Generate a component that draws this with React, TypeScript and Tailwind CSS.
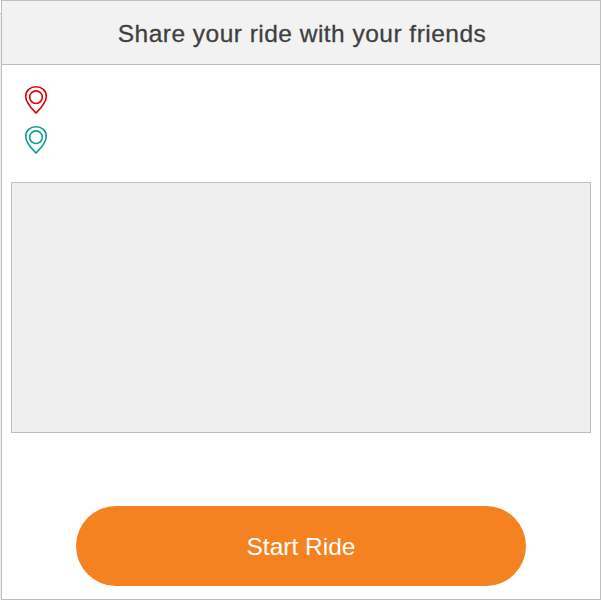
function Pin({ className }: { className: string }) {
  return (
    <svg
      width="24"
      height="30"
      viewBox="0 0 24 30"
      fill="none"
      stroke="currentColor"
      strokeWidth="1.6"
      strokeLinejoin="round"
      className={className}
    >
      <path d="M12 28C9 24.8 1.7 18 1.7 11.4C1.7 5.7 6.3 1.8 12 1.8S22.3 5.7 22.3 11.4C22.3 18 15 24.8 12 28Z" />
      <circle cx="12" cy="12.2" r="6.3" />
    </svg>
  );
}

export default function App() {
  return (
    <div className="flex h-[600px] w-[601px] bg-white font-['Liberation_Sans',Arial,sans-serif]">
      <div className="mt-[13px] w-px shrink-0 border-t border-[#bfbfbf] bg-[#ececec]" />
      <main className="flex w-[600px] flex-col border border-[#bfbfbf] bg-white">
        <header className="flex h-16 shrink-0 items-center justify-center border-b border-[#bfbfbf] bg-[#f2f2f2]">
          <h1 className="whitespace-nowrap pl-[2px] pt-[3px] text-[24.5px] tracking-[0.48px] text-[#3f4040] [-webkit-text-stroke:0.3px_#3f4040]">
            Share your ride with your friends
          </h1>
        </header>
        <div className="flex flex-col gap-[10px] pl-[22px] pt-5">
          <Pin className="text-[#e00000]" />
          <Pin className="text-[#0d9f93]" />
        </div>
        <div className="mx-[9px] mt-[27px] h-[251px] shrink-0 border border-[#bfbfbf] bg-[#efefef]" />
        <button className="ml-[74px] mt-[73px] h-20 w-[450px] shrink-0 rounded-full bg-[#f58220] pt-[2px] text-[24.5px] text-white">
          Start Ride
        </button>
      </main>
    </div>
  );
}
